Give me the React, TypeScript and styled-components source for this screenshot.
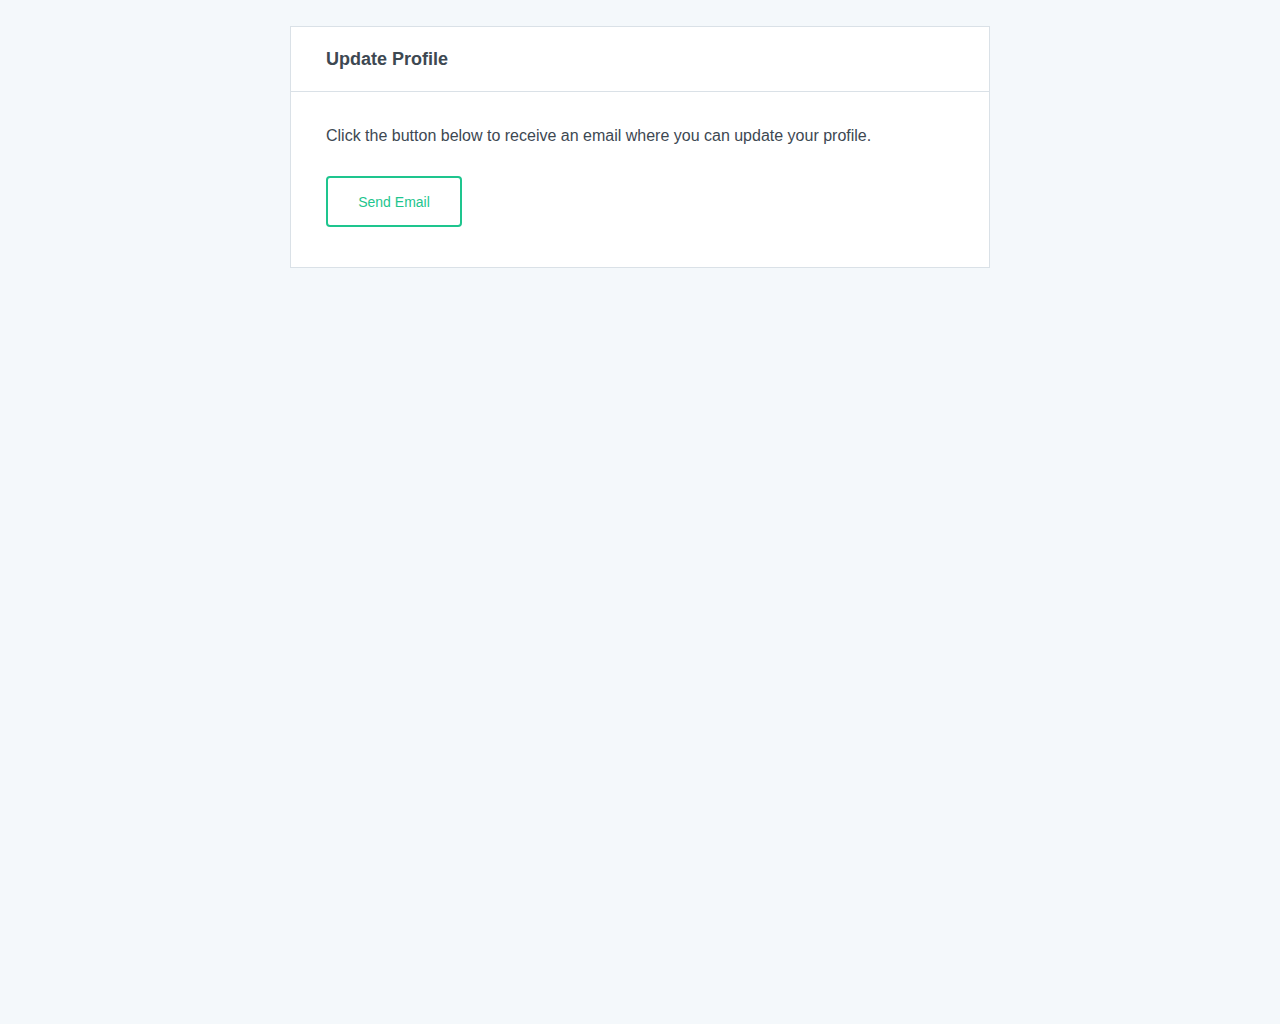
import styled, { createGlobalStyle } from "styled-components";

const GlobalStyle = createGlobalStyle`
  html, body {
    margin: 0;
    padding: 0;
    background-color: #f4f8fb;
    font-family: "Liberation Sans", Arial, sans-serif;
    color: #3d4852;
  }
`;

export default function App() {
  return (
    <>
      <GlobalStyle />
      <Page>
        <Card>
          <CardHeader>
            <Title>Update Profile</Title>
          </CardHeader>
          <CardBody>
            <Text>
              Click the button below to receive an email where you can update
              your profile.
            </Text>
            <OutlineButton type="button">Send Email</OutlineButton>
          </CardBody>
        </Card>
      </Page>
    </>
  );
}

const Page = styled.div`
  display: flex;
  justify-content: center;
  align-items: flex-start;
  padding-top: 26px;
  min-height: 100vh;
  box-sizing: border-box;
`;

const Card = styled.div`
  width: 700px;
  box-sizing: border-box;
  background-color: #fff;
  border: 1px solid #dae1e7;
`;

const CardHeader = styled.div`
  height: 64px;
  display: flex;
  align-items: center;
  padding: 0 35px;
  border-bottom: 1px solid #dae1e7;
`;

const Title = styled.h2`
  margin: 0;
  font-size: 18px;
  font-weight: 700;
  color: #3d4852;
`;

const CardBody = styled.div`
  padding: 34px 35px 40px;
  display: flex;
  flex-direction: column;
  align-items: flex-start;
`;

const Text = styled.p`
  margin: 0 0 30px;
  font-size: 16px;
  line-height: 20px;
  color: #3d4852;
`;

const OutlineButton = styled.button`
  width: 136px;
  height: 51px;
  box-sizing: border-box;
  background: #fff;
  border: 2px solid #1ec58e;
  border-radius: 4px;
  color: #1ec58e;
  font-family: "Liberation Sans", Arial, sans-serif;
  font-size: 14px;
  cursor: pointer;
`;
